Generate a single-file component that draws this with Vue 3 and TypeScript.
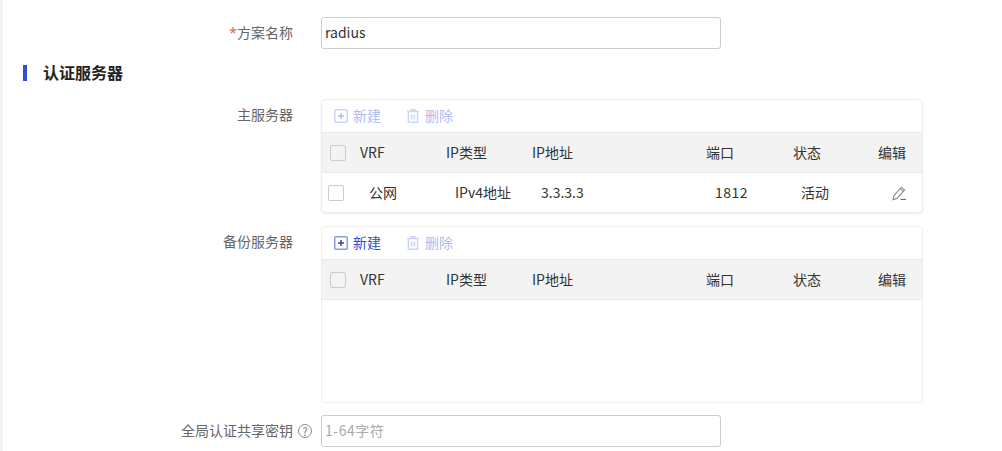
<script setup lang="ts">
interface ServerRow {
  vrf: string
  ipType: string
  ip: string
  port: number
  status: string
}

interface ServerPanel {
  label: string
  canCreate: boolean
  rows: ServerRow[]
}

const columns = ['VRF', 'IP类型', 'IP地址', '端口', '状态', '编辑']

const panels: ServerPanel[] = [
  {
    label: '主服务器',
    canCreate: false,
    rows: [{ vrf: '公网', ipType: 'IPv4地址', ip: '3.3.3.3', port: 1812, status: '活动' }]
  },
  { label: '备份服务器', canCreate: true, rows: [] }
]
</script>

<template>
  <div class="page">
    <div class="form-row name-row">
      <label class="field-label"><span class="required">*</span>方案名称</label>
      <input class="text-input" type="text" value="radius" />
    </div>

    <h2 class="section-title">认证服务器</h2>

    <div v-for="panel in panels" :key="panel.label" class="form-row server-row">
      <label class="field-label">{{ panel.label }}</label>
      <div class="panel" :class="{ 'panel-empty': panel.rows.length === 0 }">
        <div class="toolbar">
          <span class="tool" :class="panel.canCreate ? 'tool-on' : 'tool-off'">
            <svg width="14" height="14" viewBox="0 0 14 14" fill="none">
              <rect x="0.75" y="0.75" width="12.5" height="12.5" rx="1" class="icon-box" />
              <path d="M7 4v6M4 7h6" class="icon-plus" />
            </svg>
            新建
          </span>
          <span class="tool tool-off">
            <svg width="14" height="14" viewBox="0 0 14 14" fill="none">
              <path d="M1 2.6h12M5 2.4V.8h4v1.6M2.4 2.8v10.4h9.2V2.8M5.6 5.4v5M8.4 5.4v5" class="icon-box" />
            </svg>
            删除
          </span>
        </div>
        <div class="table-head">
          <span class="checkbox"></span>
          <span v-for="col in columns" :key="col">{{ col }}</span>
        </div>
        <div v-for="row in panel.rows" :key="row.ip" class="table-row">
          <span class="checkbox"></span>
          <span>{{ row.vrf }}</span>
          <span>{{ row.ipType }}</span>
          <span>{{ row.ip }}</span>
          <span class="port">{{ row.port }}</span>
          <span>{{ row.status }}</span>
          <svg class="edit-icon" width="15" height="15" viewBox="0 0 15 15" fill="none">
            <path d="M1 13.6l.9-4 7.6-8.4 3.1 2.9-7.7 8.3-3.9 1.2zM8.3 2.6l3.1 2.9" stroke="#8c8c8c" stroke-width="1.1" />
            <path d="M8.5 13.5h5.5" stroke="#666" stroke-width="1.1" />
          </svg>
        </div>
      </div>
    </div>

    <div class="form-row secret-row">
      <label class="field-label secret-label">
        全局认证共享密钥
        <span class="help">?</span>
      </label>
      <input class="text-input" type="text" placeholder="1-64字符" />
    </div>
  </div>
</template>

<style>
html,
body {
  margin: 0;
  background: #fff;
  overflow: hidden;
}
</style>

<style scoped>
.page {
  height: 451px;
  box-sizing: border-box;
  padding-top: 17px;
  border-left: 3px solid #f3f3f3;
  font-family: "Noto Sans CJK SC", "Noto Sans", sans-serif;
  font-size: 14px;
  color: #333;
}
.form-row {
  display: flex;
  align-items: flex-start;
}
.field-label {
  width: 290px;
  flex-shrink: 0;
  margin-right: 28px;
  text-align: right;
  line-height: 30px;
  color: #666;
  font-size: 14px;
}
.required {
  font-family: "Noto Sans", sans-serif;
  color: #e0664f;
}
.text-input {
  width: 400px;
  height: 32px;
  box-sizing: border-box;
  padding: 0 3px 2px;
  border: 1px solid #ccc;
  border-radius: 3px;
  font: inherit;
  color: #333;
  outline: none;
}
.text-input::placeholder {
  color: #aaa;
  opacity: 1;
  letter-spacing: 0.5px;
}
.section-title {
  margin: 16px 0 18px 20px;
  padding-left: 16px;
  border-left: 4px solid #2b50db;
  height: 16px;
  line-height: 14px;
  font-size: 16px;
  font-weight: 700;
  color: #222;
}
.server-row {
  margin-bottom: 13px;
}
.panel {
  width: 602px;
  box-sizing: border-box;
  border: 1px solid #eee;
  border-radius: 4px;
  box-shadow: 0 1px 2px rgba(0, 0, 0, 0.08);
}
.panel-empty {
  height: 177px;
  box-shadow: none;
}
.toolbar {
  display: flex;
  gap: 25px;
  height: 32px;
  box-sizing: border-box;
  padding: 0 0 2px 12px;
  align-items: center;
}
.tool {
  display: inline-flex;
  align-items: center;
  gap: 5px;
}
.tool svg {
  margin-top: 2px;
}
.tool-on {
  color: #2b50db;
}
.tool-off {
  color: #b0bbf0;
}
.icon-box {
  stroke-width: 1.5;
}
.tool-on .icon-box {
  stroke: #8f9be0;
}
.tool-on .icon-plus {
  stroke: #3a3fb0;
  stroke-width: 1.5;
}
.tool-off .icon-box {
  stroke: #cdd5f5;
}
.tool-off .icon-plus {
  stroke: #b4bff0;
  stroke-width: 1.5;
}
.table-head,
.table-row {
  display: grid;
  align-items: center;
  color: #333;
  box-sizing: border-box;
}
.table-head {
  height: 41px;
  padding: 0 0 2px 8px;
  grid-template-columns: 30px 86px 86px 174px 87px 85px 1fr;
  background: #f3f3f3;
  border-top: 1px solid #eaeaea;
  border-bottom: 1px solid #eaeaea;
}
.table-row {
  height: 39px;
  padding: 0 0 1px 6px;
  grid-template-columns: 41px 86px 86px 174px 86px 85px 1fr;
}
.port {
  letter-spacing: 0.5px;
}
.checkbox {
  width: 16px;
  height: 16px;
  margin-top: 2px;
  box-sizing: border-box;
  border: 1px solid #ccc;
  border-radius: 2px;
}
.edit-icon {
  justify-self: start;
  margin: 2px 0 0 6px;
}
.secret-row {
  margin-top: -1px;
}
.secret-label {
  display: flex;
  align-items: center;
  justify-content: flex-end;
  width: 309px;
  margin-right: 9px;
  gap: 5px;
}
.help {
  width: 12px;
  height: 12px;
  flex-shrink: 0;
  margin-top: 2px;
  border: 1px solid #8a8a8a;
  border-radius: 50%;
  font-size: 11px;
  line-height: 12px;
  text-align: center;
  color: #777;
}
</style>
